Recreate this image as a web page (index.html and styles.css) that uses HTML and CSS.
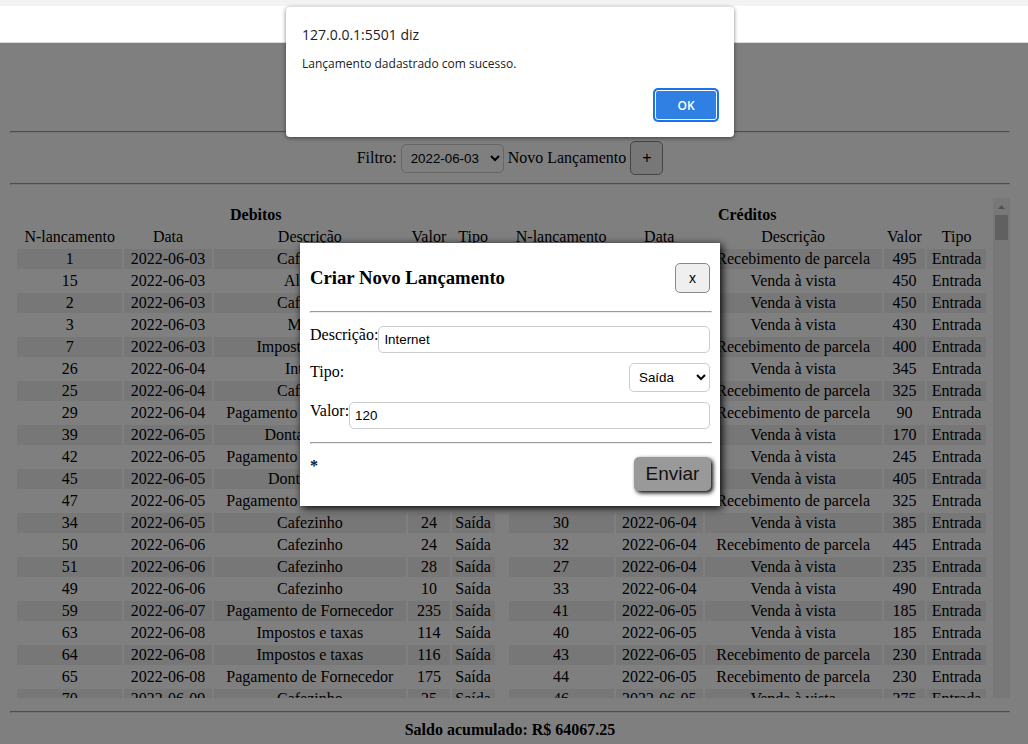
FILE: index.html
```html
<!DOCTYPE html>
<html lang="pt-BR">
<head>
<meta charset="utf-8">
<title>Lançamentos</title>
<link rel="stylesheet" href="styles.css">
</head>
<body>
<div class="browser-strip"></div>
<div class="browser-bar"></div>
<div class="page">
  <main class="content">
    <header class="banner"></header>
    <hr>
    <div class="filters">
      <label for="filtro">Filtro:</label>
      <select id="filtro" class="field date"><option>2022-06-03</option></select>
      <label for="novo">Novo Lançamento</label>
      <button id="novo" class="btn btn-add" type="button">+</button>
    </div>
    <hr>
    <section class="ledger">
      <div class="sheet"><table class="entries" id="debitos"></table></div>
      <div class="sheet"><table class="entries" id="creditos"></table></div>
      <div class="scrollbar" aria-hidden="true">
        <svg class="arrow" viewBox="0 0 17 17"><path d="M5 11h7L8.500 7z" fill="#a3a3a3"/></svg>
        <div class="thumb"></div>
        <svg class="arrow arrow-end" viewBox="0 0 17 17"><path d="M5 6h7L8.500 10z" fill="#505050"/></svg>
      </div>
    </section>
    <hr>
    <footer class="total">Saldo acumulado: R$ 64067.25</footer>
  </main>
  <div class="backdrop"></div>
</div>

<form class="modal" role="dialog" aria-labelledby="modal-title">
  <div class="modal-head">
    <h3 id="modal-title">Criar Novo Lançamento</h3>
    <button class="btn btn-close" type="button">x</button>
  </div>
  <hr>
  <div class="row"><label for="descricao">Descrição:</label><input id="descricao" class="field grow" type="text" value="Internet"></div>
  <div class="row"><label for="tipo">Tipo:</label><select id="tipo" class="field kind"><option>Saída</option><option>Entrada</option></select></div>
  <div class="row"><label for="valor">Valor:</label><input id="valor" class="field grow" type="text" value="120"></div>
  <hr>
  <div class="modal-foot"><span class="note">*</span><button class="btn-send" type="button">Enviar</button></div>
</form>

<div class="alert" role="alertdialog" aria-labelledby="alert-title">
  <div class="alert-title" id="alert-title">127.0.0.1:5501 diz</div>
  <div class="alert-text">Lançamento dadastrado com sucesso.</div>
  <button class="alert-ok" type="button">OK</button>
</div>
<script src="script.js"></script>
</body>
</html>
```
FILE: styles.css
```css
* { box-sizing: border-box; }

body {
  margin: 0;
  height: 100vh;
  display: flex;
  flex-direction: column;
  overflow: hidden;
  position: relative;
  background: #fff;
  color: #000;
  font: 16px/18px "Liberation Serif", "Times New Roman", serif;
}

hr { margin: 8px 0; width: 100%; }

.browser-strip { height: 6px; flex: none; background: #f1f3f4; }
.browser-bar { height: 37px; flex: none; border-bottom: 1px solid #dadce0; }

.page { position: relative; flex: 1; min-height: 0; overflow: hidden; }
.content { padding: 0 18px 0 10px; }
.banner { height: 80px; }
.backdrop { position: absolute; inset: 0; background: rgba(0, 0, 0, 0.5); }

.filters {
  display: flex;
  justify-content: center;
  align-items: center;
  gap: 4px;
}

.field {
  padding: 5px;
  border: 1px solid #ccc;
  border-radius: 5px;
  background: #fff;
  color: #000;
  font-family: "Liberation Sans", Arial, sans-serif;
}
select.field { height: 29px; }
input.field { height: 27px; }
.date { width: 103px; }

.btn {
  border: 1px solid #888;
  border-radius: 5px;
  background: #efefef;
  color: #000;
  font-family: "Liberation Sans", Arial, sans-serif;
}
.btn-add { width: 33px; height: 34px; padding: 0; font-size: 16px; }

.ledger {
  display: grid;
  grid-template-columns: 1fr 1fr 17px;
  height: 500px;
  margin: 13px 0;
  overflow: hidden;
}
.sheet { padding: 5px; min-width: 0; }
.entries { width: 100%; border-spacing: 2px; text-align: center; }
.entries td, .entries th { padding: 1px; white-space: nowrap; }
.entries tbody tr:nth-child(odd) td { background: #eee; }

.scrollbar { display: flex; flex-direction: column; align-items: center; background: #f1f1f1; }
.arrow { width: 17px; height: 17px; flex: none; }
.thumb { width: 13px; height: 25px; background: #c1c1c1; }
.arrow-end { margin-top: auto; }

.total { text-align: center; font-weight: bold; }

.modal {
  position: absolute;
  top: 243px;
  left: 300px;
  width: 420px;
  padding: 10px 8px 10px 10px;
  background: #fff;
  box-shadow: 2px 2px 8px #000;
}
.modal-head {
  display: flex;
  align-items: center;
  justify-content: space-between;
  height: 50px;
  padding-right: 2px;
}
.modal-head h3 { margin: 0; line-height: 22px; }
.btn-close { width: 35px; height: 30px; font-size: 14px; }
.row { display: flex; justify-content: space-between; margin: 5px 2px 10px 0; align-items: flex-start; }
.modal hr + .row { margin-top: 13px; }
.row + .row { margin-top: 10px; }
.row:has(+ hr) { margin-bottom: 13px; }
.grow { flex: 1; min-width: 0; }
.kind { width: 81px; }
.modal-foot { display: flex; justify-content: space-between; align-items: flex-start; padding: 5px 1px 5px 0; }
.note { color: #002038; font-weight: bold; }
.btn-send {
  width: 77px;
  height: 34px;
  padding: 0;
  border: 0;
  border-radius: 5px;
  background: #999;
  box-shadow: 2px 2px 4px #000;
  color: #111;
  font: 19px "Liberation Sans", Arial, sans-serif;
}

.alert {
  position: absolute;
  top: 7px;
  left: 286px;
  width: 448px;
  height: 130px;
  padding: 18px 17px 17px 16px;
  display: flex;
  flex-direction: column;
  border-radius: 4px;
  background: #fff;
  box-shadow: 0 1px 4px rgba(0, 0, 0, 0.5);
  color: #202124;
  font-family: "Open Sans", "Noto Sans", sans-serif;
}
.alert-title { font-size: 14px; line-height: 20px; }
.alert-text { margin-top: 10px; font-size: 12px; line-height: 18px; }
.alert-ok {
  width: 62px;
  height: 30px;
  margin-top: auto;
  align-self: flex-end;
  border: 1px solid #fff;
  border-radius: 3px;
  background: #307fe2;
  box-shadow: 0 0 0 2px #1a73e8;
  color: #fff;
  font: 600 12px "Open Sans", "Noto Sans", sans-serif;
}
```
FILE: script.js
```js
const C = "Cafezinho", P = "Pagamento de Fornecedor", I = "Impostos e taxas";
const V = "Venda à vista", R = "Recebimento de parcela";

const debitos = [
  [1, "03", C, 24], [15, "03", "Aluguel", 900], [2, "03", C, 24], [3, "03", "Multas", 80],
  [7, "03", I, 120], [26, "04", "Internet", 120], [25, "04", C, 24], [29, "04", P, 210],
  [39, "05", "Dontabilidade", 300], [42, "05", P, 185], [45, "05", "Dontabilidad", 300], [47, "05", P, 190],
  [34, "05", C, 24], [50, "06", C, 24], [51, "06", C, 28], [49, "06", C, 10],
  [59, "07", P, 235], [63, "08", I, 114], [64, "08", I, 116], [65, "08", P, 175], [70, "09", C, 25]
];

const creditos = [
  [4, "03", R, 495], [5, "03", V, 450], [6, "03", V, 450], [8, "03", V, 430],
  [9, "03", R, 400], [10, "03", V, 345], [11, "03", R, 325], [12, "03", R, 90],
  [13, "03", V, 170], [14, "03", V, 245], [16, "04", V, 405], [28, "04", R, 325],
  [30, "04", V, 385], [32, "04", R, 445], [27, "04", V, 235], [33, "04", V, 490],
  [41, "05", V, 185], [40, "05", V, 185], [43, "05", R, 230], [44, "05", R, 230], [46, "05", V, 275]
];

function render(id, title, rows, kind) {
  const body = rows.map(([n, day, text, value]) =>
    `<tr><td>${n}</td><td>2022-06-${day}</td><td>${text}</td><td>${value}</td><td>${kind}</td></tr>`
  ).join("");
  document.getElementById(id).innerHTML =
    `<thead><tr><th colspan="5">${title}</th></tr>
     <tr><td>N-lancamento</td><td>Data</td><td>Descrição</td><td>Valor</td><td>Tipo</td></tr></thead>
     <tbody>${body}</tbody>`;
}

render("debitos", "Debitos", debitos, "Saída");
render("creditos", "Créditos", creditos, "Entrada");
```
